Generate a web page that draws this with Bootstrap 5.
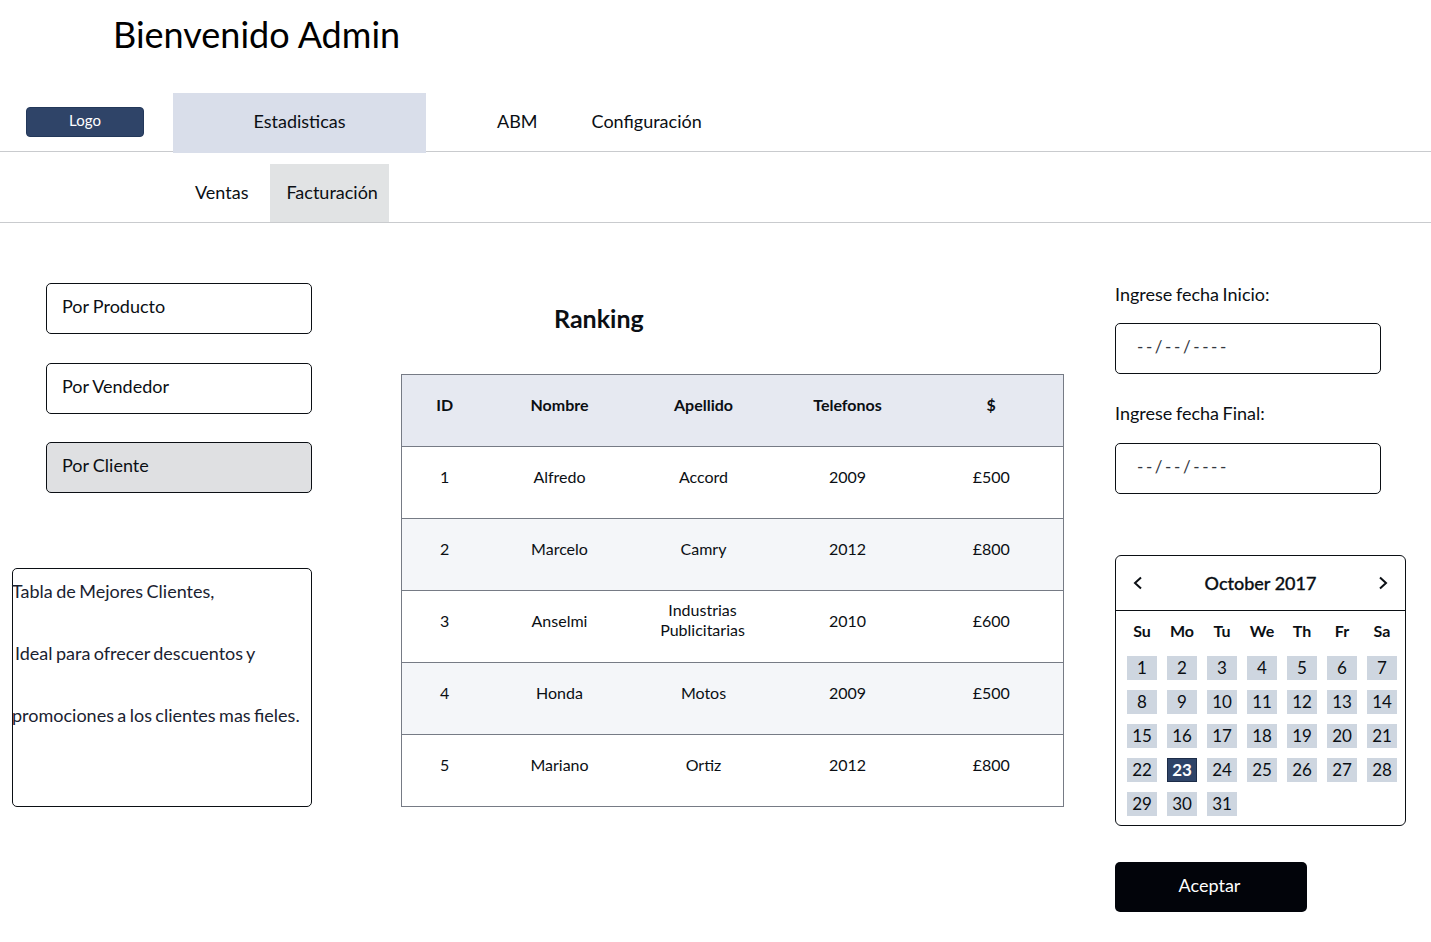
<!DOCTYPE html>
<html lang="es">
<head>
    <meta charset="UTF-8">
    <meta name="viewport" content="width=device-width, initial-scale=1.0">
    <title>Bienvenido Admin</title>
    <link href="https://cdn.jsdelivr.net/npm/bootstrap@5.3.0/dist/css/bootstrap.min.css" rel="stylesheet">
    <script src="https://cdn.jsdelivr.net/npm/bootstrap@5.3.0/dist/js/bootstrap.bundle.min.js"></script>
    <style>
        body { font-family: Lato, "Liberation Sans", sans-serif; color: #0b0f14; background: #fff; }
        .welcome { height: 93px; padding: 11px 0 0 113px; margin: 0; font-size: 36px; line-height: 46px; font-weight: 400; color: #000; }

        .main-nav { height: 59px; border-bottom: 1px solid #c9cbce; padding-left: 26px; }
        .logo-btn { width: 118px; height: 30px; margin: 14px 29px 0 0; padding: 0 0 5px; font-size: 15px; line-height: 24px;
            color: #fff; background: #2f4468; border: 1px solid #23385a; border-radius: 4px; }
        .main-nav .nav-link { height: 60px; padding: 0; line-height: 56px; font-size: 18px; color: #0b0f14; }
        .tab-active { width: 253px; background: #d9deea; text-align: center; margin-right: 71px; }
        .tab-abm { margin-right: 54px; }

        .sub-nav { height: 71px; border-bottom: 1px solid #c9cbce; padding: 12px 0 0 195px; }
        .sub-nav .nav-link { height: 58px; padding: 0; line-height: 56px; font-size: 18px; color: #0b0f14; }
        .sub-ventas { margin-right: 22px; }
        .sub-active { width: 119px; padding-left: 16px !important; background: #e1e3e4; }

        .content { padding: 60px 0 0 12px; }
        .left-col { width: 300px; margin-right: 89px; }
        .side-btn { display: block; width: 266px; height: 51px; margin: 0 0 29px 34px; padding: 0 15px 6px; text-align: left;
            font-size: 18px; word-spacing: -.5px; line-height: 44px; color: #0b0f14; background: #fff; border: 1px solid #0b0f14; border-radius: 5px; }
        .side-btn.vendedor { margin-bottom: 28px; }
        .side-btn.picked { background: #dfe0e2; }
        .note { height: 239px; margin-top: 75px; border: 1px solid #0b0f14; border-radius: 5px; font-size: 18px; word-spacing: -1.2px; line-height: 44px; color: #1a2230; }
        .note p { margin: 0 0 18px -1px; white-space: nowrap; }
        .note .ideal { padding-left: 3px; }

        .mid-col { width: 662px; margin-right: 52px; }
        .ranking { margin: 0; height: 91px; padding: 19px 0 0 153px; font-size: 25px; line-height: 32px; font-weight: 700; color: #0b0f14; }
        .rank-table { width: 662px; table-layout: fixed; margin: 0; border-collapse: collapse; font-size: 16px; border: 1px solid #767b85; }
        .rank-table th, .rank-table td { height: 72px; padding: 0 0 11px; text-align: center; vertical-align: middle; line-height: 20px;
            border: 0; border-top: 1px solid #767b85; border-bottom: 1px solid #767b85; color: #0b0f14; background: #fff; box-shadow: none; }
        .rank-table th { background: #e6e9f1; font-weight: 700; padding-bottom: 11px; }
        .rank-table tr:nth-child(even) td { background: #f4f6f9; }
        .rank-table tr:nth-child(3) td:nth-child(3) { padding: 0 2px 13px 0; }

        .right-col { width: 291px; }
        .date-label { margin: 0; height: 40px; font-size: 18px; word-spacing: -1px; line-height: 22px; color: #0b0f14; }
        .date-label.second { height: 41px; }
        .date-field { width: 266px; height: 51px; padding: 0 21px 4px; font-size: 17px; letter-spacing: 2.6px; color: #555; border: 1px solid #0b0f14; border-radius: 5px; margin-bottom: 28px; }
        .date-field::placeholder { color: #33383f; opacity: 1; }

        .calendar { width: 291px; height: 271px; margin-top: 61px; border: 1px solid #0b0f14; border-radius: 6px; }
        .cal-head { height: 55px; border-bottom: 1px solid #0b0f14; padding: 0 16px; font-size: 18px; font-weight: 500; -webkit-text-stroke: .3px #0b0f14; }
        .cal-grid { display: grid; grid-template-columns: repeat(7, 30px); column-gap: 10px; padding: 10px 0 0 11px; justify-items: center; }
        .cal-dow { height: 35px; font-size: 16px; line-height: 20px; font-weight: 700; white-space: nowrap; }
        .cal-day { width: 30px; height: 24px; margin-bottom: 10px; background: #ced6e0; text-align: center; font-size: 17px; line-height: 24px; color: #0b0f14; }
        .cal-day.today { background: #2f4468; color: #fff; font-weight: 700; outline: 1px solid #1c2c48; outline-offset: -1px; }

        .accept { display: block; width: 192px; height: 50px; margin-top: 36px; padding: 0 3px 4px 0; font-size: 18px; color: #fff; background: #02040a; border: 0; border-radius: 5px; }
    </style>
</head>
<body>
    <h1 class="welcome">Bienvenido Admin</h1>

    <!-- Main navigation -->
    <nav class="nav main-nav align-items-start">
        <button class="btn logo-btn" type="button">Logo</button>
        <a class="nav-link tab-active" href="#">Estadisticas</a>
        <a class="nav-link tab-abm" href="#">ABM</a>
        <a class="nav-link" href="#">Configuración</a>
    </nav>

    <!-- Sub navigation -->
    <nav class="nav sub-nav align-items-start">
        <a class="nav-link sub-ventas" href="#">Ventas</a>
        <a class="nav-link sub-active" href="#">Facturación</a>
    </nav>

    <main class="d-flex align-items-start content">
        <div class="left-col">
            <button class="btn side-btn" type="button">Por Producto</button>
            <button class="btn side-btn vendedor" type="button">Por Vendedor</button>
            <button class="btn side-btn picked" type="button">Por Cliente</button>
            <div class="note">
                <p>Tabla de Mejores Clientes,</p>
                <p class="ideal">Ideal para ofrecer descuentos y</p>
                <p>promociones a los clientes mas fieles.</p>
            </div>
        </div>

        <div class="mid-col">
            <h2 class="ranking">Ranking</h2>
            <table class="table rank-table">
                <colgroup>
                    <col style="width:86px"><col style="width:144px"><col style="width:144px"><col style="width:144px"><col style="width:144px">
                </colgroup>
                <thead>
                    <tr><th>ID</th><th>Nombre</th><th>Apellido</th><th>Telefonos</th><th>$</th></tr>
                </thead>
                <tbody id="rankBody"></tbody>
            </table>
        </div>

        <div class="right-col">
            <p class="date-label">Ingrese fecha Inicio:</p>
            <input class="form-control date-field" type="text" placeholder="--/--/----">
            <p class="date-label second">Ingrese fecha Final:</p>
            <input class="form-control date-field" type="text" placeholder="--/--/----">

            <div class="calendar">
                <div class="d-flex justify-content-between align-items-center cal-head">
                    <svg width="12" height="14" viewBox="0 0 12 14" fill="none" stroke="#0b0f14" stroke-width="2"><path d="M9 1.5 3 7l6 5.5"/></svg>
                    <span>October 2017</span>
                    <svg width="12" height="14" viewBox="0 0 12 14" fill="none" stroke="#0b0f14" stroke-width="2"><path d="M3 1.5 9 7l-6 5.5"/></svg>
                </div>
                <div class="cal-grid" id="calGrid"></div>
            </div>

            <button class="btn accept" type="button">Aceptar</button>
        </div>
    </main>

    <script>
        // Table rows
        const rows = [
            ["1", "Alfredo", "Accord", "2009", "£500"],
            ["2", "Marcelo", "Camry", "2012", "£800"],
            ["3", "Anselmi", "Industrias<br>Publicitarias", "2010", "£600"],
            ["4", "Honda", "Motos", "2009", "£500"],
            ["5", "Mariano", "Ortiz", "2012", "£800"]
        ];
        document.getElementById("rankBody").innerHTML = rows
            .map(r => "<tr>" + r.map(c => "<td>" + c + "</td>").join("") + "</tr>")
            .join("");

        // Calendar cells
        const grid = document.getElementById("calGrid");
        let html = "";
        ["Su", "Mo", "Tu", "We", "Th", "Fr", "Sa"].forEach(d => {
            html += '<div class="cal-dow">' + d + "</div>";
        });
        for (let i = 1; i <= 31; i++) {
            html += '<div class="cal-day' + (i === 23 ? " today" : "") + '">' + i + "</div>";
        }
        grid.innerHTML = html;
    </script>
</body>
</html>
